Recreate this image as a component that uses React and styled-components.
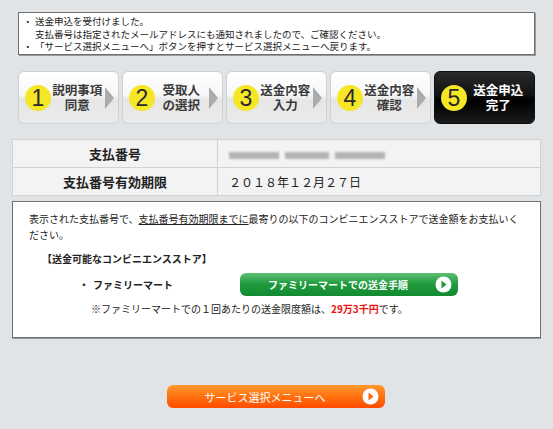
import React from 'react';
import styled, { createGlobalStyle } from 'styled-components';

const GlobalStyle = createGlobalStyle`
  html, body {
    margin: 0;
    padding: 0;
    background: #e1e4e7;
  }
  body {
    font-family: "Noto Sans CJK JP", "Noto Sans", sans-serif;
    color: #222;
  }
`;

const Page = styled.div`
  width: 553px;
  height: 429px;
  overflow: hidden;
  padding-top: 12px;
  box-sizing: border-box;
`;

const Notice = styled.ul`
  margin: 0 0 0 18px;
  width: 517px;
  box-sizing: border-box;
  height: 43px;
  padding: 2px 6px;
  list-style: none;
  background: #fff;
  border: 1px solid #6f6f6f;
  box-shadow: 1px 1px 0 #9a9a9a;
  font-size: 9.5px;
  line-height: 12.5px;
`;

const NoticeItem = styled.li`
  position: relative;
  padding-left: 10px;
  &::before {
    content: '・';
    position: absolute;
    left: -2px;
  }
`;

const Steps = styled.div`
  display: flex;
  gap: 3.5px;
  margin: 16px 0 0 18px;
`;

const Step = styled.div`
  position: relative;
  width: 100.5px;
  height: 53px;
  box-sizing: border-box;
  border-radius: 6px;
  border: 1px solid ${p => (p.$active ? '#111' : '#cfd2d4')};
  background: ${p =>
    p.$active
      ? 'linear-gradient(#2a2a2a 0%, #111 45%, #000 55%, #1a1a1a 100%)'
      : 'linear-gradient(#ffffff 0%, #f7f7f7 45%, #e6e6e6 55%, #ebebeb 100%)'};
  display: flex;
  align-items: center;
  padding-left: 6px;
`;

const Num = styled.span`
  flex: none;
  width: 26px;
  height: 26px;
  border-radius: 50%;
  background: #f5e626;
  color: #2a2a2a;
  font-family: "Liberation Sans", Arial, sans-serif;
  font-size: 23px;
  line-height: 26px;
  text-align: center;
`;

const StepLabel = styled.span`
  flex: 1;
  text-align: center;
  font-weight: bold;
  font-size: 12.5px;
  line-height: 15px;
  color: ${p => (p.$active ? '#fff' : '#3a3a3a')};
  padding-right: ${p => (p.$active ? '4px' : '14px')};
  margin-top: -2px;
`;

const Arrow = styled.span`
  position: absolute;
  right: 4px;
  top: 15px;
  width: 0;
  height: 0;
  border-top: 11px solid transparent;
  border-bottom: 11px solid transparent;
  border-left: 9px solid #a9abad;
`;

const InfoTable = styled.table`
  margin: 15px 0 0 12px;
  width: 529px;
  border-collapse: collapse;
  background: #f3f3f3;
  font-size: 13px;
  td {
    border: 1px solid #d2d2d2;
    height: 27px;
    padding: 0;
  }
`;

const HeadCell = styled.td`
  width: 204px;
  text-align: center;
  font-weight: bold;
  color: #222;
`;

const ValueCell = styled.td`
  padding-left: 11px !important;
  font-size: 12px;
`;

const Blur = styled.span`
  display: inline-block;
  width: ${p => p.$w}px;
  height: 7px;
  margin-right: 6px;
  background: #b4b4b4;
  filter: blur(1.3px);
  vertical-align: middle;
`;

const Box = styled.div`
  margin: 5px 0 0 12px;
  width: 529px;
  height: 137px;
  box-sizing: border-box;
  background: #fff;
  border: 1px solid #6f6f6f;
  box-shadow: 0 1px 0 #9a9a9a;
  padding: 9px 16px;
  font-size: 10px;
  line-height: 16px;
`;

const Lead = styled.p`
  margin: 0;
  u {
    text-decoration: underline;
  }
`;

const StoreTitle = styled.div`
  margin: 8px 0 0 13px;
  font-weight: bold;
`;

const StoreRow = styled.div`
  display: flex;
  align-items: center;
  margin-top: 6px;
  padding-left: 50px;
`;

const StoreName = styled.span`
  width: 161px;
  font-weight: bold;
  &::before {
    content: '・';
    margin-right: 4px;
  }
`;

const PillButton = styled.a`
  position: relative;
  display: flex;
  align-items: center;
  justify-content: center;
  width: 218px;
  height: 23px;
  box-sizing: border-box;
  border-radius: 6px;
  color: #fff;
  text-decoration: none;
  padding-right: 22px;
  background: ${p =>
    p.$tone === 'orange'
      ? 'linear-gradient(#ff9a2e 0%, #ff7210 50%, #ff4a00 100%)'
      : 'linear-gradient(#5cbf74 0%, #1e9a3c 50%, #128a31 100%)'};
  font-weight: ${p => (p.$tone === 'orange' ? 'normal' : 'bold')};
  font-size: ${p => (p.$tone === 'orange' ? '11px' : '10px')};
`;

const PlayIcon = styled.svg`
  position: absolute;
  right: 6px;
  top: 3px;
`;

const Note = styled.div`
  margin: 5px 0 0 62px;
  em {
    font-style: normal;
    font-weight: bold;
    color: #ee1111;
  }
`;

const Footer = styled.div`
  margin: 47px 0 0 167px;
`;

const Play = ({ color }) => (
  <PlayIcon width="17" height="17" viewBox="0 0 17 17">
    <circle cx="8.5" cy="8.5" r="8" fill="#fff" />
    <path d="M6.5 4.5 L11.5 8.5 L6.5 12.5 Z" fill={color} />
  </PlayIcon>
);

const steps = [
  ['1', '説明事項', '同意'],
  ['2', '受取人', 'の選択'],
  ['3', '送金内容', '入力'],
  ['4', '送金内容', '確認'],
  ['5', '送金申込', '完了'],
];

export default function App() {
  return (
    <Page>
      <GlobalStyle />
      <Notice>
        <NoticeItem>
          送金申込を受付けました。
          <br />
          支払番号は指定されたメールアドレスにも通知されましたので、ご確認ください。
        </NoticeItem>
        <NoticeItem>「サービス選択メニューへ」ボタンを押すとサービス選択メニューへ戻ります。</NoticeItem>
      </Notice>

      <Steps>
        {steps.map(([n, a, b], i) => {
          const active = i === steps.length - 1;
          return (
            <Step key={n} $active={active}>
              <Num>{n}</Num>
              <StepLabel $active={active}>
                {a}
                <br />
                {b}
              </StepLabel>
              {!active && <Arrow />}
            </Step>
          );
        })}
      </Steps>

      <InfoTable>
        <tbody>
          <tr>
            <HeadCell>支払番号</HeadCell>
            <ValueCell>
              <Blur $w={50} />
              <Blur $w={44} />
              <Blur $w={50} />
            </ValueCell>
          </tr>
          <tr>
            <HeadCell>支払番号有効期限</HeadCell>
            <ValueCell>２０１８年１２月２７日</ValueCell>
          </tr>
        </tbody>
      </InfoTable>

      <Box>
        <Lead>
          表示された支払番号で、<u>支払番号有効期限までに</u>最寄りの以下のコンビニエンスストアで送金額をお支払いください。
        </Lead>
        <StoreTitle>【送金可能なコンビニエンスストア】</StoreTitle>
        <StoreRow>
          <StoreName>ファミリーマート</StoreName>
          <PillButton $tone="green">
            ファミリーマートでの送金手順
            <Play color="#1e9a3c" />
          </PillButton>
        </StoreRow>
        <Note>
          ※ファミリーマートでの１回あたりの送金限度額は、<em>29万3千円</em>です。
        </Note>
      </Box>

      <Footer>
        <PillButton $tone="orange">
          サービス選択メニューへ
          <Play color="#ff6a00" />
        </PillButton>
      </Footer>
    </Page>
  );
}
